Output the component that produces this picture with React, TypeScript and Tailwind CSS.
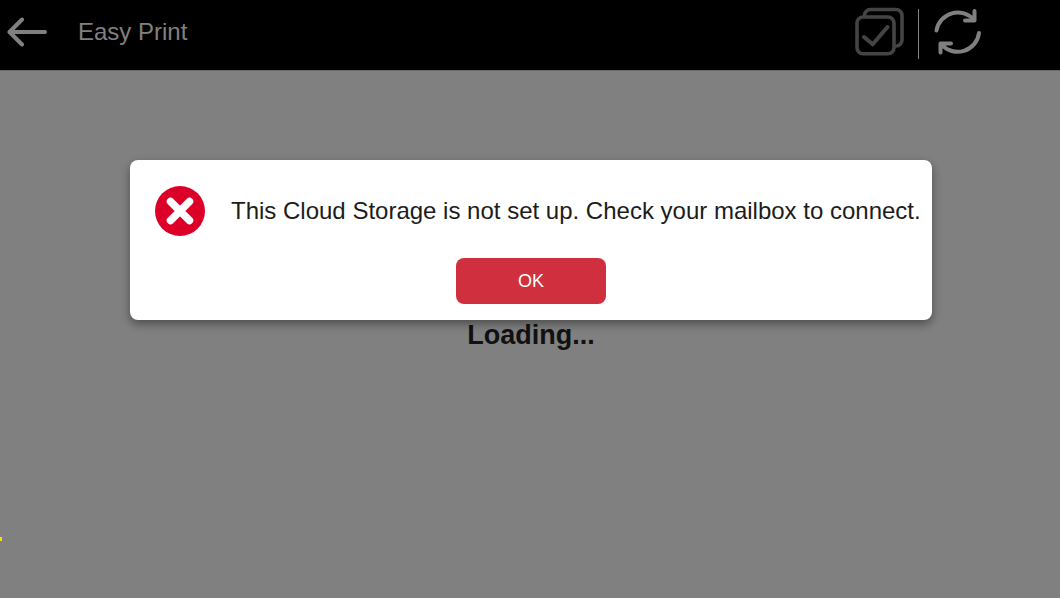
function BackIcon() {
  return (
    <svg className="h-[30px] w-[42px]" viewBox="0 0 42 30" fill="none" stroke="#808080" strokeWidth="4" strokeLinecap="round" strokeLinejoin="round" aria-hidden="true">
      <path d="M16 2.500 3.500 15l12.500 12.500" />
      <path d="M4 15H39" />
    </svg>
  );
}

function SelectAllIcon() {
  return (
    <svg className="h-[50px] w-[50px]" viewBox="0 0 50 50" fill="none" stroke="#444444" strokeWidth="3.6" strokeLinecap="round" strokeLinejoin="round" aria-hidden="true">
      <rect x="3" y="10" width="37" height="36.8" rx="6" />
      <path d="M10.500 9.500V8.500a6 6 0 0 1 6-6H42a6 6 0 0 1 6 6V33a6 6 0 0 1-6 6H40.500" />
      <path d="m10 30 8.700 7.300L33.500 20" strokeWidth="4" />
    </svg>
  );
}

function RefreshIcon() {
  return (
    <svg className="h-[48px] w-[48px]" viewBox="0 0 48 48" fill="none" stroke="#808080" strokeWidth="4" strokeLinecap="round" strokeLinejoin="round" aria-hidden="true">
      <path d="M3.500 22.500A21.500 21.500 0 0 1 41 12M41.500 3V12.500H32" />
      <path d="M46 25A21.500 21.500 0 0 1 8.500 36.500M7.500 44.500V35.500H18" />
    </svg>
  );
}

function ErrorIcon() {
  return (
    <svg className="h-[50px] w-[50px] shrink-0" viewBox="0 0 50 50" role="img" aria-label="Error">
      <circle cx="25" cy="25" r="25" fill="#dc0028" />
      <path d="m15.500 15.500 19 19m0-19-19 19" stroke="#fff" strokeWidth="7.500" strokeLinecap="round" />
    </svg>
  );
}

function Header() {
  return (
    <header className="flex h-[70px] shrink-0 items-start justify-between bg-black pr-[79px] pl-1.5">
      <div className="flex h-16 items-center gap-[30px]">
        <button type="button" aria-label="Back">
          <BackIcon />
        </button>
        <h1 className="text-2xl text-[#808080]">Easy Print</h1>
      </div>
      <div className="flex h-16 items-center">
        <button type="button" aria-label="Select all">
          <SelectAllIcon />
        </button>
        <div className="mx-[14px] mt-1 h-[50px] w-px bg-[#808080]" />
        <button type="button" aria-label="Refresh">
          <RefreshIcon />
        </button>
      </div>
    </header>
  );
}

export default function App() {
  return (
    <div className="relative flex min-h-screen flex-col overflow-hidden bg-[#808080] font-['Liberation_Sans',Arial,sans-serif]">
      <Header />
      <main className="flex grow items-center justify-center border-t border-[#6b6b6b] pl-0.5">
        <p className="text-[27px] leading-8 font-bold text-[#111111]">Loading...</p>
      </main>
      <div className="absolute top-[537px] left-0 h-1 w-0.5 bg-[#ffdc00]" />
      <div className="absolute inset-x-0 top-[160px] flex justify-center pl-0.5">
        <div role="alertdialog" aria-labelledby="dialog-message" className="flex w-[802px] max-w-full flex-col items-center rounded-lg bg-white px-5 pt-[26px] pb-4 shadow-[0_4px_10px_rgba(0,0,0,0.4)]">
          <div className="flex w-full items-center gap-[26px] pl-[5px]">
            <ErrorIcon />
            <p id="dialog-message" className="whitespace-nowrap text-2xl text-[#1c1c1c]">
              This Cloud Storage is not set up. Check your mailbox to connect.
            </p>
          </div>
          <button type="button" className="mt-[22px] h-[46px] w-[150px] rounded-lg bg-[#d02f3e] text-lg text-white">
            OK
          </button>
        </div>
      </div>
    </div>
  );
}
